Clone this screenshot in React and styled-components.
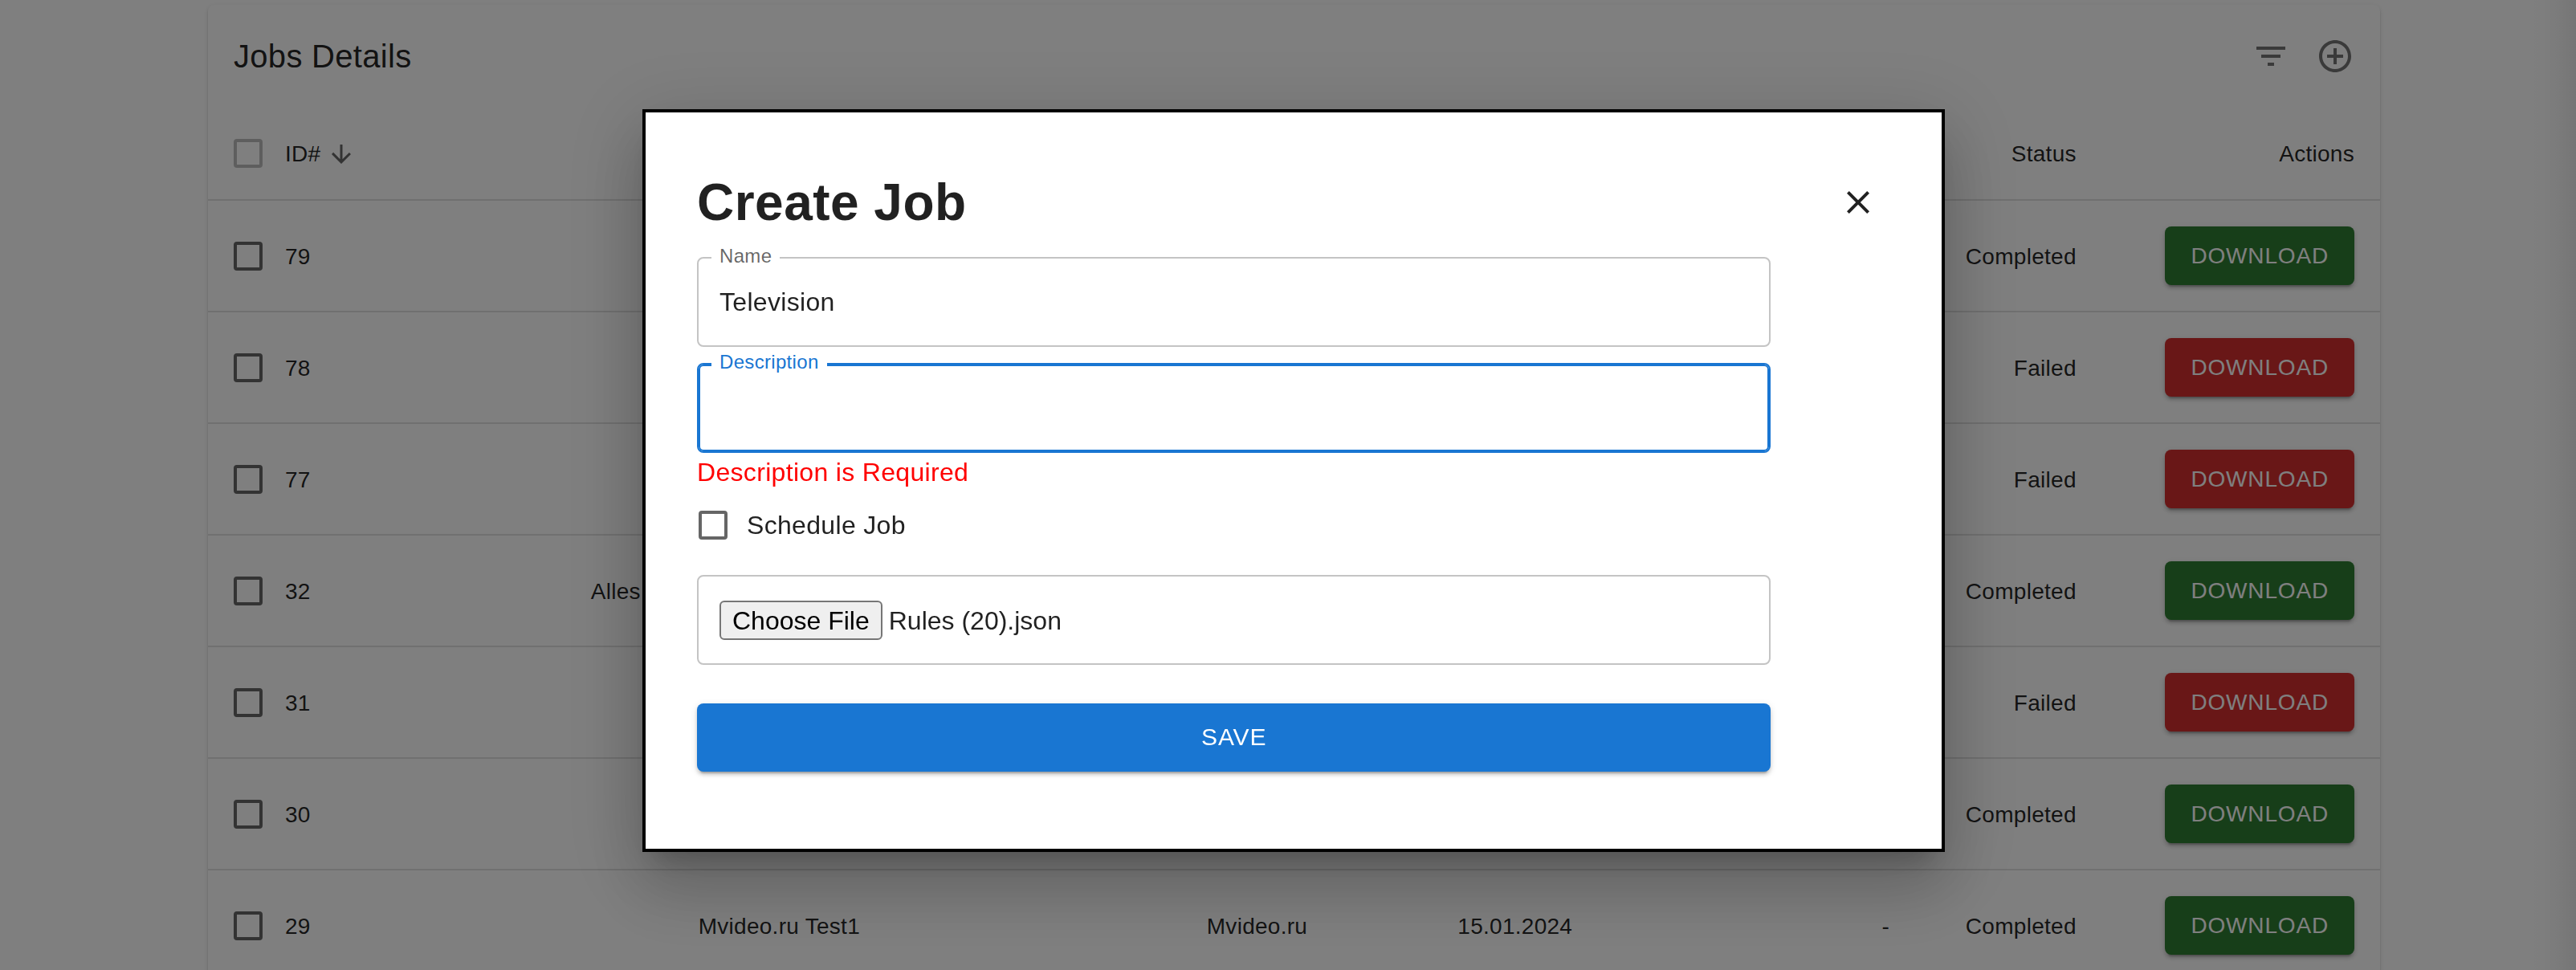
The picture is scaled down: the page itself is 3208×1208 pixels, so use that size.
import React, { useEffect, useRef } from "react";
import styled, { createGlobalStyle, css } from "styled-components";

const GlobalStyle = createGlobalStyle`
  *, *::before, *::after { box-sizing: border-box; }
  body {
    margin: 0;
    background: #fff;
    color: rgba(0, 0, 0, 0.87);
    font-family: "Liberation Sans", Arial, Helvetica, sans-serif;
    font-size: 28px;
    line-height: 40px;
  }
  button, input { font-family: inherit; }
`;

const Page = styled.main`
  height: 100vh;
  overflow: hidden;
  padding: 6px 244px 0 259px;
  background: linear-gradient(
    to left,
    rgba(0, 0, 0, 0.08),
    rgba(0, 0, 0, 0.03) 24px,
    rgba(0, 0, 0, 0.01) 40px,
    transparent 64px
  );
`;

const Card = styled.section`
  border-radius: 8px;
  background: #fff;
  box-shadow: 0 4px 2px -2px rgba(0, 0, 0, 0.2), 0 2px 2px rgba(0, 0, 0, 0.14),
    0 2px 6px rgba(0, 0, 0, 0.12);
`;

const Toolbar = styled.header`
  display: flex;
  align-items: center;
  height: 128px;
  padding: 0 16px 0 32px;
`;

const ToolbarTitle = styled.h2`
  flex: 1;
  margin: 0;
  font-size: 40px;
  font-weight: 400;
  line-height: 64px;
  letter-spacing: 0.0075em;
`;

const IconButton = styled.button`
  display: flex;
  align-items: center;
  justify-content: center;
  width: 80px;
  height: 80px;
  padding: 0;
  border: 0;
  border-radius: 50%;
  background: transparent;
  color: ${(p) => (p.$dark ? "rgba(0, 0, 0, 0.87)" : "rgba(0, 0, 0, 0.54)")};
  cursor: pointer;
`;

const Svg = styled.svg`
  display: block;
  flex: none;
  width: ${(p) => p.$size}px;
  height: ${(p) => p.$size}px;
  fill: currentColor;
`;

const Table = styled.table`
  width: 100%;
  border-collapse: separate;
  border-spacing: 0;
  table-layout: fixed;
  letter-spacing: 0.01em;
`;

const Col = styled.col`
  width: ${(p) => p.$width};
`;

const cell = css`
  padding: ${(p) => (p.$control ? 0 : 2)}px ${(p) => (p.$flush ? 0 : 32)}px 0;
  border-bottom: 2px solid #e0e0e0;
  font-weight: 400;
  text-align: ${(p) => (p.$flush ? "left" : "right")};
  white-space: nowrap;
`;

const HeadCell = styled.th`
  ${cell}
  height: 116px;
`;

const Cell = styled.td`
  ${cell}
  height: 139px;
`;

const RowHeader = styled.th`
  ${cell}
`;

const SortButton = styled.button`
  display: inline-flex;
  align-items: center;
  gap: 8px;
  padding: 0;
  border: 0;
  background: transparent;
  color: inherit;
  font-size: 28px;
  line-height: 40px;
  letter-spacing: inherit;
  cursor: pointer;

  svg { color: rgba(0, 0, 0, 0.6); }
`;

const Checkbox = styled.input.attrs({ type: "checkbox" })`
  appearance: none;
  display: block;
  flex: none;
  width: 36px;
  height: 36px;
  margin: ${(p) => (p.$inTable ? "0 0 0 32px" : "0 0 0 2px")};
  border: 4px solid rgba(0, 0, 0, 0.6);
  border-radius: 4px;
  cursor: pointer;

  &:checked { background: #1976d2; border-color: #1976d2; }
  &:disabled { border-color: rgba(0, 0, 0, 0.26); cursor: default; }
`;

const raised = css`
  border: 0;
  border-radius: 8px;
  color: #fff;
  letter-spacing: 0.03em;
  text-transform: uppercase;
  cursor: pointer;
  box-shadow: 0 6px 2px -4px rgba(0, 0, 0, 0.2), 0 4px 4px rgba(0, 0, 0, 0.14),
    0 2px 10px rgba(0, 0, 0, 0.12);
`;

const DownloadButton = styled.button`
  ${raised}
  height: 73px;
  padding: 0 32px;
  background: ${(p) => (p.$failed ? "#d32f2f" : "#2e7d32")};
  font-size: 28px;
  vertical-align: middle;
`;

const Backdrop = styled.div`
  position: fixed;
  inset: 0;
  display: flex;
  align-items: center;
  justify-content: center;
  padding: 0 0 12px 14px;
  background: rgba(0, 0, 0, 0.5);
`;

const Dialog = styled.section`
  width: calc(50% + 25px);
  padding: 64px;
  border: 4px solid #000;
  background: #fff;
  box-shadow: 0 22px 30px -14px rgba(0, 0, 0, 0.2), 0 48px 76px 6px rgba(0, 0, 0, 0.14),
    0 18px 92px 16px rgba(0, 0, 0, 0.12);
`;

const DialogHeader = styled.header`
  display: flex;
  align-items: center;
  justify-content: space-between;
  height: 96px;
`;

const DialogTitle = styled.h1`
  margin: 0;
  font-size: 64px;
  font-weight: 700;
  line-height: 96px;
  letter-spacing: 0.0075em;
`;

const Form = styled.form`
  width: 90%;
  padding: 20px 0 32px;
  font-size: 32px;
  line-height: 48px;
  letter-spacing: 0.01em;
`;

const Field = styled.div`
  position: relative;
  display: flex;
  align-items: center;
  height: 112px;
  margin-bottom: ${(p) => p.$gap}px;
  padding: 2px 26px 0;
  border: 2px solid #c4c4c4;
  border-radius: 8px;

  &:focus-within {
    border-color: #1976d2;
    box-shadow: inset 0 0 0 2px #1976d2;
  }
`;

const FieldLabel = styled.label`
  position: absolute;
  top: -17px;
  left: 16px;
  padding: 0 10px;
  background: #fff;
  color: rgba(0, 0, 0, 0.6);
  font-size: 24px;
  line-height: 28px;

  ${Field}:focus-within & { color: #1976d2; }
`;

const TextInput = styled.input`
  width: 100%;
  height: 48px;
  padding: 0;
  border: 0;
  outline: 0;
  background: transparent;
  color: inherit;
  font-size: 32px;
  letter-spacing: inherit;
  caret-color: transparent;
`;

const FileInput = styled.input.attrs({ type: "file" })`
  width: 100%;
  color: inherit;
  font-size: 32px;
  line-height: 40px;
  letter-spacing: 0;

  &::file-selector-button {
    height: 49px;
    margin: 0 8px 0 0;
    padding: 0 14px;
    border: 2px solid #767676;
    border-radius: 6px;
    background: #efefef;
    color: #000;
    font: inherit;
  }
`;

const ErrorText = styled.div`
  color: #f00;
`;

const CheckLabel = styled.label`
  display: flex;
  align-items: center;
  gap: 24px;
  height: 84px;
  margin-bottom: 20px;
`;

const SaveButton = styled.button`
  ${raised}
  display: block;
  width: 100%;
  height: 85px;
  background: #1976d2;
  font-size: 30px;
`;

const FilterIcon = () => (
  <Svg $size={48} viewBox="0 0 24 24" aria-hidden="true">
    <path d="M10 18h4v-2h-4v2zM3 6v2h18V6H3zm3 7h12v-2H6v2z" />
  </Svg>
);

const AddIcon = () => (
  <Svg $size={48} viewBox="0 0 24 24" aria-hidden="true">
    <path d="M13 7h-2v4H7v2h4v4h2v-4h4v-2h-4V7zm-1-5C6.48 2 2 6.48 2 12s4.48 10 10 10 10-4.48 10-10S17.52 2 12 2zm0 18c-4.41 0-8-3.59-8-8s3.59-8 8-8 8 3.59 8 8-3.59 8-8 8z" />
  </Svg>
);

const ArrowDownIcon = () => (
  <Svg $size={36} viewBox="0 0 24 24" aria-hidden="true">
    <path d="M20 12l-1.41-1.41L13 16.17V4h-2v12.17l-5.58-5.59L4 12l8 8 8-8z" />
  </Svg>
);

const CloseIcon = () => (
  <Svg $size={48} viewBox="0 0 24 24" aria-hidden="true">
    <path d="M19 6.41L17.59 5 12 10.59 6.41 5 5 6.41 10.59 12 5 17.59 6.41 19 12 13.41 17.59 19 19 17.59 13.41 12z" />
  </Svg>
);

const columns = ["Name", "Website", "Created", "Next Run", "Status", "Actions"];
const widths = ["96px", "auto", "18%", "20.6%", "12.2%", "14.6%", "8.6%", "12.8%"];

const jobs = [
  { id: 79, name: "", status: "Completed" },
  { id: 78, name: "", status: "Failed" },
  { id: 77, name: "", status: "Failed" },
  { id: 32, name: "Alles Kategorien Set Test1", status: "Completed" },
  { id: 31, name: "", status: "Failed" },
  { id: 30, name: "", status: "Completed" },
  { id: 29, name: "Mvideo.ru Test1", status: "Completed" },
];

function JobRow({ job }) {
  return (
    <tr>
      <Cell $flush $control>
        <Checkbox $inTable aria-label={`Select job ${job.id}`} />
      </Cell>
      <RowHeader $flush scope="row">{job.id}</RowHeader>
      <Cell>{job.name}</Cell>
      <Cell>Mvideo.ru</Cell>
      <Cell>15.01.2024</Cell>
      <Cell>-</Cell>
      <Cell>{job.status}</Cell>
      <Cell $control>
        <DownloadButton type="button" $failed={job.status === "Failed"}>Download</DownloadButton>
      </Cell>
    </tr>
  );
}

function JobsCard() {
  return (
    <Card>
      <Toolbar>
        <ToolbarTitle>Jobs Details</ToolbarTitle>
        <IconButton type="button" aria-label="Filter list"><FilterIcon /></IconButton>
        <IconButton type="button" aria-label="Create job"><AddIcon /></IconButton>
      </Toolbar>
      <Table>
        <colgroup>
          {widths.map((w, i) => <Col key={i} $width={w} />)}
        </colgroup>
        <thead>
          <tr>
            <HeadCell $flush $control>
              <Checkbox $inTable disabled aria-label="Select all jobs" />
            </HeadCell>
            <HeadCell $flush scope="col">
              <SortButton type="button">ID#<ArrowDownIcon /></SortButton>
            </HeadCell>
            {columns.map((c) => <HeadCell key={c} scope="col">{c}</HeadCell>)}
          </tr>
        </thead>
        <tbody>
          {jobs.map((job) => <JobRow key={job.id} job={job} />)}
        </tbody>
      </Table>
    </Card>
  );
}

function CreateJobDialog() {
  const fileRef = useRef(null);
  const descriptionRef = useRef(null);

  useEffect(() => {
    const transfer = new DataTransfer();
    transfer.items.add(new File(["{}"], "Rules (20).json", { type: "application/json" }));
    fileRef.current.files = transfer.files;
    descriptionRef.current.focus();
  }, []);

  return (
    <Backdrop>
      <Dialog role="dialog" aria-modal="true" aria-labelledby="dialog-title">
        <DialogHeader>
          <DialogTitle id="dialog-title">Create Job</DialogTitle>
          <IconButton $dark type="button" aria-label="Close"><CloseIcon /></IconButton>
        </DialogHeader>
        <Form onSubmit={(e) => e.preventDefault()}>
          <Field $gap={20}>
            <FieldLabel htmlFor="job-name">Name</FieldLabel>
            <TextInput id="job-name" type="text" defaultValue="Television" />
          </Field>
          <Field $gap={0}>
            <FieldLabel htmlFor="job-description">Description</FieldLabel>
            <TextInput
              id="job-description"
              type="text"
              ref={descriptionRef}
              aria-invalid="true"
              aria-describedby="description-error"
            />
          </Field>
          <ErrorText id="description-error">Description is Required</ErrorText>
          <CheckLabel>
            <Checkbox />
            Schedule Job
          </CheckLabel>
          <Field $gap={48}>
            <FileInput ref={fileRef} aria-label="Rules file" />
          </Field>
          <SaveButton type="submit">Save</SaveButton>
        </Form>
      </Dialog>
    </Backdrop>
  );
}

export default function App() {
  return (
    <>
      <GlobalStyle />
      <Page>
        <JobsCard />
      </Page>
      <CreateJobDialog />
    </>
  );
}
